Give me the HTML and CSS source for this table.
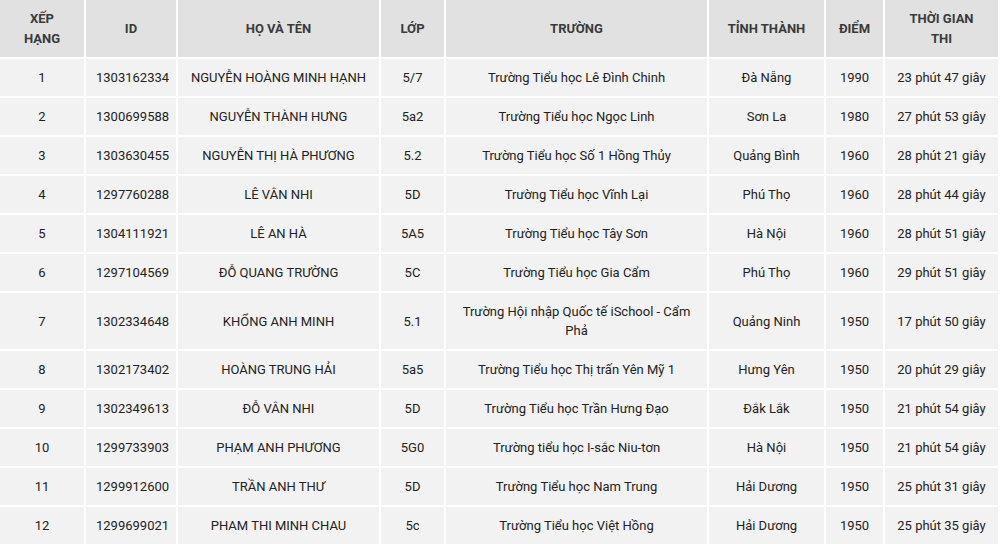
FILE: index.html
```html
<!DOCTYPE html>
<html lang="vi">
<head>
<meta charset="utf-8">
<title>Bảng xếp hạng</title>
<link rel="stylesheet" href="styles.css">
</head>
<body>
<table class="rank">
<colgroup>
<col class="c1"><col class="c2"><col class="c3"><col class="c4"><col class="c5"><col class="c6"><col class="c7"><col class="c8">
</colgroup>
<thead>
<tr><th>XẾP<br>HẠNG</th><th>ID</th><th>HỌ VÀ TÊN</th><th>LỚP</th><th>TRƯỜNG</th><th>TỈNH THÀNH</th><th>ĐIỂM</th><th>THỜI GIAN<br>THI</th></tr>
</thead>
<tbody>
<tr><td>1</td><td>1303162334</td><td>NGUYỄN HOÀNG MINH HẠNH</td><td>5/7</td><td>Trường Tiểu học Lê Đình Chinh</td><td>Đà Nẵng</td><td>1990</td><td>23 phút 47 giây</td></tr>
<tr><td>2</td><td>1300699588</td><td>NGUYỄN THÀNH HƯNG</td><td>5a2</td><td>Trường Tiểu học Ngọc Linh</td><td>Sơn La</td><td>1980</td><td>27 phút 53 giây</td></tr>
<tr><td>3</td><td>1303630455</td><td>NGUYỄN THỊ HÀ PHƯƠNG</td><td>5.2</td><td>Trường Tiểu học Số 1 Hồng Thủy</td><td>Quảng Bình</td><td>1960</td><td>28 phút 21 giây</td></tr>
<tr><td>4</td><td>1297760288</td><td>LÊ VÂN NHI</td><td>5D</td><td>Trường Tiểu học Vĩnh Lại</td><td>Phú Thọ</td><td>1960</td><td>28 phút 44 giây</td></tr>
<tr><td>5</td><td>1304111921</td><td>LÊ AN HÀ</td><td>5A5</td><td>Trường Tiểu học Tây Sơn</td><td>Hà Nội</td><td>1960</td><td>28 phút 51 giây</td></tr>
<tr><td>6</td><td>1297104569</td><td>ĐỖ QUANG TRƯỜNG</td><td>5C</td><td>Trường Tiểu học Gia Cẩm</td><td>Phú Thọ</td><td>1960</td><td>29 phút 51 giây</td></tr>
<tr><td>7</td><td>1302334648</td><td>KHỔNG ANH MINH</td><td>5.1</td><td>Trường Hội nhập Quốc tế iSchool - Cẩm Phả</td><td>Quảng Ninh</td><td>1950</td><td>17 phút 50 giây</td></tr>
<tr><td>8</td><td>1302173402</td><td>HOÀNG TRUNG HẢI</td><td>5a5</td><td>Trường Tiểu học Thị trấn Yên Mỹ 1</td><td>Hưng Yên</td><td>1950</td><td>20 phút 29 giây</td></tr>
<tr><td>9</td><td>1302349613</td><td>ĐỖ VÂN NHI</td><td>5D</td><td>Trường Tiểu học Trần Hưng Đạo</td><td>Đắk Lắk</td><td>1950</td><td>21 phút 54 giây</td></tr>
<tr><td>10</td><td>1299733903</td><td>PHẠM ANH PHƯƠNG</td><td>5G0</td><td>Trường tiểu học I-sắc Niu-tơn</td><td>Hà Nội</td><td>1950</td><td>21 phút 54 giây</td></tr>
<tr><td>11</td><td>1299912600</td><td>TRẦN ANH THƯ</td><td>5D</td><td>Trường Tiểu học Nam Trung</td><td>Hải Dương</td><td>1950</td><td>25 phút 31 giây</td></tr>
<tr><td>12</td><td>1299699021</td><td>PHAM THI MINH CHAU</td><td>5c</td><td>Trường Tiểu học Việt Hồng</td><td>Hải Dương</td><td>1950</td><td>25 phút 35 giây</td></tr>
</tbody>
</table>
</body>
</html>
```

FILE: styles.css
```css
html, body {
  margin: 0;
  padding: 0;
  background: #ffffff;
  overflow: hidden;
}

body {
  font-family: Roboto, "Liberation Sans", Arial, sans-serif;
  font-size: 13px;
  color: #333333;
}

.rank {
  table-layout: fixed;
  border-collapse: separate;
  border-spacing: 2px;
  width: 1002px;
  margin: -2px 0 0 -2px;
}

.c1 { width: 84px; }
.c2 { width: 90px; }
.c3 { width: 201px; }
.c4 { width: 63px; }
.c5 { width: 261px; }
.c6 { width: 115px; }
.c7 { width: 57px; }
.c8 { width: 113px; }

.rank th,
.rank td {
  text-align: center;
  vertical-align: middle;
  padding: 9px 10px;
}

.rank th {
  background: #e1e1e1;
  font-weight: 700;
  line-height: 19.5px;
  color: #3a3a3a;
}

.rank td {
  background: #f2f2f2;
  line-height: 19px;
  color: #222222;
}
```
